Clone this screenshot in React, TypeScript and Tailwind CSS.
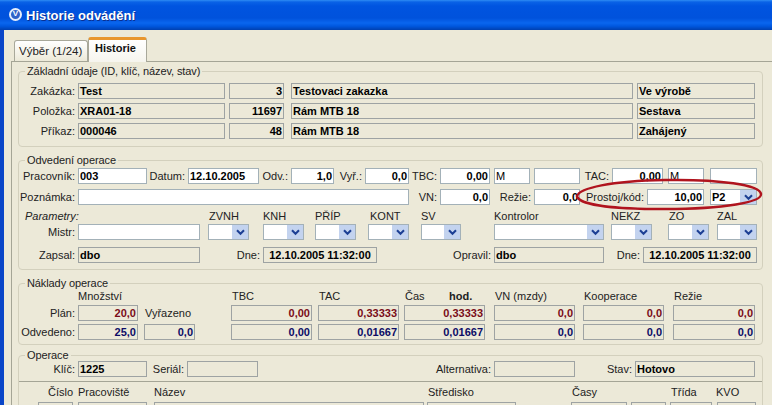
import React from "react";

type P = { c?: string; children?: React.ReactNode };

const base = "h-[16px] shrink-0 border border-solid flex items-center px-[1px] overflow-hidden whitespace-nowrap text-[11px] leading-none";

// read-only bold value
const V = ({ c = "", children }: P) => (
  <div className={`${base} bg-[#ece9d8] border-[#9ea3a3] font-bold text-black ${c}`}>{children}</div>
);
// read-only right aligned
const N = ({ c = "", children }: P) => (
  <div className={`${base} bg-[#ece9d8] border-[#9ea3a3] font-bold justify-end ${c}`}>{children}</div>
);
// white input
const W = ({ c = "", children }: P) => (
  <div className={`${base} bg-white border-[#a3b1b8] font-bold text-black ${c}`}>{children}</div>
);
const L = ({ c = "", children }: P) => (
  <div className={`h-[16px] shrink-0 flex items-center justify-end pr-[3px] whitespace-nowrap text-[11px] leading-none text-[#222] ${c}`}>
    {children}
  </div>
);
const H = ({ c = "", children }: P) => (
  <div className={`shrink-0 whitespace-nowrap text-[11px] leading-[14px] text-[#222] ${c}`}>{children}</div>
);
const S = ({ c = "", children }: P) => (
  <div className={`h-[16px] shrink-0 bg-white border border-solid border-[#a3b1b8] flex items-stretch justify-between text-[11px] font-bold text-black ${c}`}>
    <span className="pl-[1px] leading-[14px]">{children}</span>
    <span className="w-[16px] bg-[#c3d3ef] flex items-center justify-center">
      <svg width="9" height="7" viewBox="0 0 9 7">
        <path d="M1 1.2 L4.5 4.8 L8 1.2" fill="none" stroke="#1c3f94" strokeWidth="2" />
      </svg>
    </span>
  </div>
);
const Row = ({ c = "", children }: P) => <div className={`flex ${c}`}>{children}</div>;
const Group = ({ title, c = "", children }: P & { title: string }) => (
  <div className={`w-[745px] border border-solid border-[#d3d0bd] rounded-[4px] ${c}`}>
    <div className="-mt-[8px] ml-[6px] w-fit h-[14px] px-[2px] bg-[#ece9d8] text-[11px] leading-[14px] tracking-[-0.1px] text-[#222] whitespace-nowrap">
      {title}
    </div>
    {children}
  </div>
);

export default function App() {
  return (
    <div className="relative w-[772px] h-[405px] overflow-hidden flex flex-col bg-[#ece9d8] font-['Liberation_Sans',Arial,sans-serif]">
      {/* Title bar */}
      <div className="h-[30px] shrink-0 flex items-center pl-[9px] gap-[4px] bg-[linear-gradient(to_bottom,#2e8cf4_0px,#0a62e6_2px,#0054e0_6px,#0052dc_18px,#0a66ee_23px,#0058e0_26px,#0040b0_30px)]">
        <div className="-mt-[2px] w-[13px] h-[13px] rounded-full bg-[#2f62c8] border-2 border-solid border-[#e6eefb] flex items-center justify-center text-[8px] leading-none font-bold text-white">
          V
        </div>
        <div className="mt-[1px] text-[13px] leading-none font-bold text-white [text-shadow:1px_1px_0_#0a2f90]">Historie odvádění</div>
      </div>

      <div className="flex-1 flex border-l-[4px] border-solid border-[#0a46c8]">
        <div className="pl-[7px] flex-1 flex flex-col">
          {/* Tabs */}
          <div className="flex items-end pl-[3px] mt-[7px] h-[25px] relative z-10 -mb-px">
            <div className="w-[74px] h-[21px] mb-px border border-b-0 border-solid border-[#a8a89a] rounded-t-[3px] bg-[linear-gradient(to_bottom,#ffffff,#ece9d8)] text-[11.5px] leading-[20px] pl-[4px] text-[#222] whitespace-nowrap">
              Výběr (1/24)
            </div>
            <div className="w-[59px] h-[25px] border-x border-t-[3px] border-solid border-x-[#a8a89a] border-t-[#e8962e] rounded-t-[3px] bg-[linear-gradient(to_bottom,#ffffff,#f6f5ee)] text-[11px] font-bold leading-[16px] pl-[6px] text-[#111] whitespace-nowrap">
              Historie
            </div>
          </div>

          {/* Panel */}
          <div className="flex-1 border-t border-l border-solid border-[#a5a596] pl-[6px] pt-[9px]">
            <Group title="Základní údaje (ID, klíč, název, stav)" c="h-[76px]">
              <div className="mt-[5px] flex flex-col gap-[4px]">
                <Row>
                  <L c="w-[59px]">Zakázka:</L>
                  <V c="w-[147px]">Test</V>
                  <N c="w-[55px] ml-[4px]">3</N>
                  <V c="w-[342px] ml-[7px]">Testovaci zakazka</V>
                  <V c="w-[118px] ml-[4px]">Ve výrobě</V>
                </Row>
                <Row>
                  <L c="w-[59px]">Položka:</L>
                  <V c="w-[147px]">XRA01-18</V>
                  <N c="w-[55px] ml-[4px]">11697</N>
                  <V c="w-[342px] ml-[7px]">Rám MTB 18</V>
                  <V c="w-[118px] ml-[4px]">Sestava</V>
                </Row>
                <Row>
                  <L c="w-[59px]">Příkaz:</L>
                  <V c="w-[147px]">000046</V>
                  <N c="w-[55px] ml-[4px]">48</N>
                  <V c="w-[342px] ml-[7px]">Rám MTB 18</V>
                  <V c="w-[118px] ml-[4px]">Zahájený</V>
                </Row>
              </div>
            </Group>

            <Group title="Odvedení operace" c="h-[110px] mt-[13px]">
              <Row c="mt-[1px]">
                <L c="w-[59px]">Pracovník:</L>
                <W c="w-[69px]">003</W>
                <L c="w-[41px]">Datum:</L>
                <W c="w-[71px]">12.10.2005</W>
                <L c="w-[32px]">Odv.:</L>
                <W c="w-[43px] justify-end">1,0</W>
                <L c="w-[31px]">Vyř.:</L>
                <W c="w-[44px] justify-end">0,0</W>
                <L c="w-[31px]">TBC:</L>
                <W c="w-[50px] justify-end">0,00</W>
                <W c="w-[36px] ml-[4px] font-normal">M</W>
                <W c="w-[46px] ml-[4px]" />
                <L c="w-[32px]">TAC:</L>
                <W c="w-[51px] justify-end">0,00</W>
                <W c="w-[36px] ml-[5px] font-normal">M</W>
                <W c="w-[47px] ml-[6px]" />
              </Row>
              <Row c="mt-[5px]">
                <L c="w-[59px]">Poznámka:</L>
                <W c="w-[331px]" />
                <L c="w-[31px]">VN:</L>
                <W c="w-[50px] justify-end">0,0</W>
                <L c="w-[44px]">Režie:</L>
                <W c="w-[46px] justify-end">0,0</W>
                <L c="w-[67px]">Prostoj/kód:</L>
                <W c="w-[57px] justify-end">10,00</W>
                <S c="w-[47px] ml-[6px]">P2</S>
              </Row>
              <Row c="mt-[4px]">
                <H c="w-[184px] ml-[6px] italic">Parametry:</H>
                <H c="w-[54px]">ZVNH</H>
                <H c="w-[52px]">KNH</H>
                <H c="w-[55px]">PŘÍP</H>
                <H c="w-[51px]">KONT</H>
                <H c="w-[73px]">SV</H>
                <H c="w-[117px]">Kontrolor</H>
                <H c="w-[58px]">NEKZ</H>
                <H c="w-[48px]">ZO</H>
                <H>ZAL</H>
              </Row>
              <Row c="mt-[1px]">
                <L c="w-[59px]">Mistr:</L>
                <W c="w-[122px]" />
                <S c="w-[41px] ml-[8px]" />
                <S c="w-[41px] ml-[14px]" />
                <S c="w-[41px] ml-[11px]" />
                <S c="w-[41px] ml-[12px]" />
                <S c="w-[40px] ml-[12px]" />
                <S c="w-[110px] ml-[33px]" />
                <S c="w-[41px] ml-[7px]" />
                <S c="w-[41px] ml-[16px]" />
                <S c="w-[40px] ml-[8px]" />
              </Row>
              <Row c="mt-[7px]">
                <L c="w-[59px]">Zapsal:</L>
                <V c="w-[122px]">dbo</V>
                <L c="w-[63px]">Dne:</L>
                <V c="w-[114px] justify-center">12.10.2005 11:32:00</V>
                <L c="w-[117px]">Opravil:</L>
                <V c="w-[110px]">dbo</V>
                <L c="w-[39px]">Dne:</L>
                <V c="w-[114px] justify-center">12.10.2005 11:32:00</V>
              </Row>
            </Group>

            <Group title="Náklady operace" c="h-[62px] mt-[13px]">
              <Row c="-mt-[1px]">
                <H c="w-[154px] ml-[59px]">Množství</H>
                <H c="w-[87px]">TBC</H>
                <H c="w-[86px]">TAC</H>
                <H c="w-[44px]">Čas</H>
                <H c="w-[46px] font-bold">hod.</H>
                <H c="w-[89px]">VN (mzdy)</H>
                <H c="w-[90px]">Kooperace</H>
                <H>Režie</H>
              </Row>
              <Row c="mt-[2px]">
                <L c="w-[59px]">Plán:</L>
                <N c="w-[60px] text-[#7a0c18]">20,0</N>
                <H c="w-[86px] ml-[7px] leading-[16px]">Vyřazeno</H>
                <N c="w-[81px] text-[#7a0c18]">0,00</N>
                <N c="w-[81px] ml-[6px] text-[#7a0c18]">0,33333</N>
                <N c="w-[81px] ml-[5px] text-[#7a0c18]">0,33333</N>
                <N c="w-[81px] ml-[9px] text-[#7a0c18]">0,0</N>
                <N c="w-[81px] ml-[8px] text-[#7a0c18]">0,0</N>
                <N c="w-[82px] ml-[9px] text-[#7a0c18]">0,0</N>
              </Row>
              <Row c="mt-[3px]">
                <L c="w-[59px]">Odvedeno:</L>
                <N c="w-[60px] text-[#0c0c66]">25,0</N>
                <N c="w-[51px] ml-[6px] text-[#0c0c66]">0,0</N>
                <N c="w-[81px] ml-[36px] text-[#0c0c66]">0,00</N>
                <N c="w-[81px] ml-[6px] text-[#0c0c66]">0,01667</N>
                <N c="w-[81px] ml-[5px] text-[#0c0c66]">0,01667</N>
                <N c="w-[81px] ml-[9px] text-[#0c0c66]">0,0</N>
                <N c="w-[81px] ml-[8px] text-[#0c0c66]">0,0</N>
                <N c="w-[82px] ml-[9px] text-[#0c0c66]">0,0</N>
              </Row>
            </Group>

            <Group title="Operace" c="h-[70px] mt-[10px]">
              <Row c="-mt-[1px]">
                <L c="w-[59px]">Klíč:</L>
                <V c="w-[69px]">1225</V>
                <L c="w-[40px]">Seriál:</L>
                <V c="w-[71px]" />
                <L c="w-[236px]">Alternativa:</L>
                <V c="w-[81px]" />
                <L c="w-[60px]">Stav:</L>
                <V c="w-[120px]">Hotovo</V>
              </Row>
              <div className="mt-[4px] border-t border-solid border-[#a5a596]" />
              <Row c="mt-[3px]">
                <H c="w-[54px] text-right">Číslo</H>
                <H c="w-[76px] ml-[5px]">Pracoviště</H>
                <H c="w-[274px]">Název</H>
                <H c="w-[144px]">Středisko</H>
                <H c="w-[99px]">Časy</H>
                <H c="w-[45px]">Třída</H>
                <H>KVO</H>
              </Row>
              <Row c="mt-[3px]">
                <V c="w-[35px] ml-[19px]" />
                <V c="w-[69px] ml-[5px]" />
                <V c="w-[270px] ml-[7px]" />
                <V c="w-[89px] ml-[3px]" />
                <V c="w-[56px] ml-[55px]" />
                <V c="w-[35px] ml-[4px]" />
                <V c="w-[42px] ml-[4px]" />
                <V c="w-[39px] ml-[5px]" />
              </Row>
            </Group>
          </div>
        </div>
      </div>

      {/* Red hand-drawn ellipse on top of the page */}
      <svg className="absolute left-0 top-0 pointer-events-none" width="772" height="405" viewBox="0 0 772 405">
        <path
          d="M577 196 C580 188 610 181 665 180 C720 179 760 185 761 194 C762 202 725 209 665 209 C615 209 578 205 577 196 Z"
          fill="none"
          stroke="#b0141e"
          strokeWidth="2.5"
        />
      </svg>
    </div>
  );
}
